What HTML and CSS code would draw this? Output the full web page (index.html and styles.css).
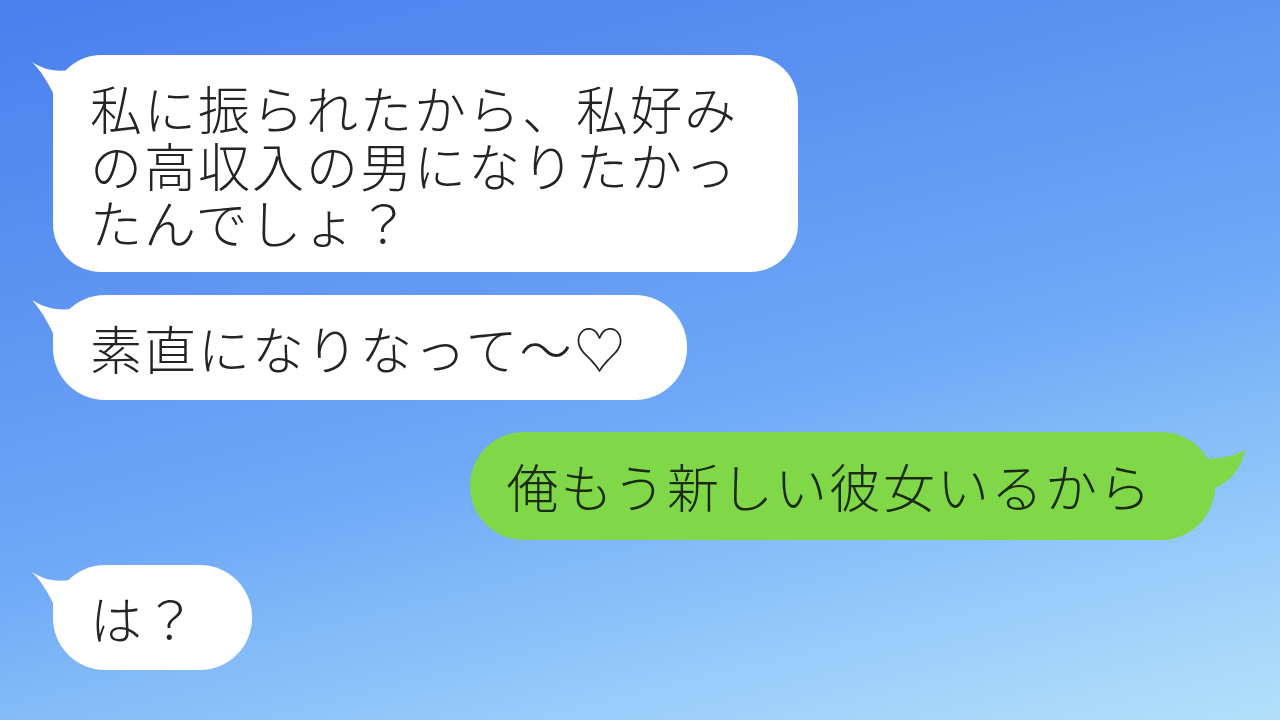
FILE: index.html
```html
<!DOCTYPE html>
<html lang="ja">
<head>
    <meta charset="UTF-8">
    <meta name="viewport" content="width=device-width, initial-scale=1.0">
    <title>トーク</title>
    <link rel="stylesheet" href="styles.css">
</head>
<body>

<div class="chat">
    <div class="row">
        <div class="bubble left tall">
            <svg class="tail" viewBox="-22 0 52 52" width="52" height="52"><path d="M-21,7 C-10,14 5,20 30,12 L30,52 L0,52 L0,38 C-6,26 -12,16 -21,7 Z"/></svg>
            私に振られたから、私好み<br>の高収入の男になりたかっ<br>たんでしょ？
        </div>
    </div>

    <div class="row gap-1">
        <div class="bubble left">
            <svg class="tail" viewBox="-22 0 52 52" width="52" height="52"><path d="M-21,5 C-10,12 5,18 30,12 L30,52 L0,52 L0,38 C-6,26 -12,15 -21,5 Z"/></svg>
            素直になりなって〜♡
        </div>
    </div>

    <div class="row right-row gap-2">
        <div class="bubble right">
            <svg class="tail" viewBox="-30 0 62 62" width="62" height="62"><path d="M30,17 C25,23 8,27 -17,27 L-17,62 L0,62 L0,56 C15,50 27,36 30,17 Z"/></svg>
            俺もう新しい彼女いるから
        </div>
    </div>

    <div class="row gap-3">
        <div class="bubble left short">
            <svg class="tail" viewBox="-22 0 52 52" width="52" height="52"><path d="M-21,7 C-10,14 5,20 30,12 L30,52 L0,52 L0,38 C-6,26 -12,16 -21,7 Z"/></svg>
            は？
        </div>
    </div>
</div>

</body>
</html>
```

FILE: styles.css
```css
html, body {
    margin: 0;
    height: 100%;
}
body {
    width: 1280px;
    height: 720px;
    overflow: hidden;
    background: linear-gradient(166deg, #4a7fec 0%, #5d94f2 30%, #6ea8f6 55%, #a4d6fb 90%, #b2e0fa 100%);
    font-family: "Noto Sans CJK JP", "Noto Sans", sans-serif;
    font-weight: 300;
    color: #242424;
}
.chat {
    display: flex;
    flex-direction: column;
    padding: 55px 65px 0 53px;
}
.row {
    display: flex;
}
.right-row {
    justify-content: flex-end;
}
.gap-1 {
    margin-top: 23px;
}
.gap-2 {
    margin-top: 32px;
}
.gap-3 {
    margin-top: 25px;
}
.bubble {
    position: relative;
    font-size: 52px;
    letter-spacing: 2px;
    line-height: 57px;
    padding: 24px 60px 24px 37px;
    border-radius: 52px;
    white-space: nowrap;
}
.tall {
    padding-top: 24px;
    padding-bottom: 22px;
    border-radius: 48px;
}
.short {
    padding-right: 54px;
}
.left {
    background: #fff;
}
.left .tail {
    position: absolute;
    left: -22px;
    top: 0;
    fill: #fff;
}
.right {
    background: #80d849;
    color: #1b2a12;
    padding: 25px 62px 26px 37px;
    border-radius: 54px;
}
.right .tail {
    position: absolute;
    right: -32px;
    top: 0;
    fill: #80d849;
}
```
